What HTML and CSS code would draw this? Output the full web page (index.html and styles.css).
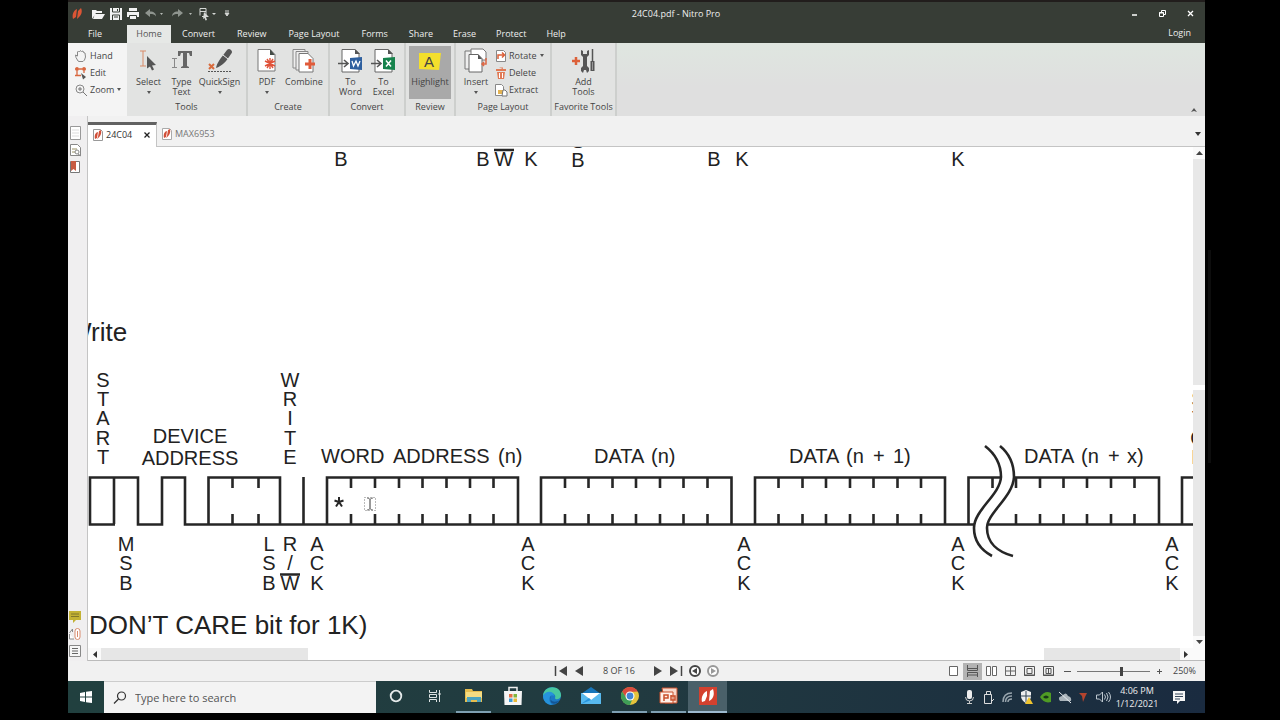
FILE: index.html
```html
<!DOCTYPE html>
<html lang="en">
<head>
<meta charset="utf-8">
<title>24C04.pdf - Nitro Pro</title>
<link rel="stylesheet" href="styles.css">
</head>
<body>
<div class="screen">
  <header class="titlebar">
    <div class="quick">
      <svg class="logo" width="18" height="18" viewBox="0 0 18 18"><path d="M5 14c-1-4 0-8 4-10l-1 8zM9 14l1-8 3-3c2 4 0 8-4 11z" fill="#dc5535"/></svg>
      <button aria-label="Open"><svg width="15" height="14" viewBox="0 0 15 14"><path d="M1 12V3h4l1 1h5v2H5zM4 7h10l-3 5H2z" fill="#f2f2f2"/></svg></button>
      <button aria-label="Save"><svg width="14" height="14" viewBox="0 0 14 14"><path d="M1 1h12v12H1z" fill="#f2f2f2"/><path d="M3.500 1v4h7V1M3.500 13V8h7v5M5 10h4M8.500 2v2" stroke="#373d36" fill="none"/></svg></button>
      <button aria-label="Print"><svg width="14" height="14" viewBox="0 0 14 14"><path d="M3 1h8v3H3zM1 5h12v5H1z" fill="#f2f2f2"/><path d="M3.500 8.500h7v4h-7z" fill="#f2f2f2" stroke="#373d36"/></svg></button>
      <button class="wide" aria-label="Undo"><svg width="22" height="14" viewBox="0 0 22 14"><path d="M1 6l5-4v2.500c4 0 6 2 6 5-1-2-3-2.500-6-2.500V10z" fill="#8f958f"/><path d="M16 6h3l-1.500 2z" fill="#b5bab5"/></svg></button>
      <button class="wide" aria-label="Redo"><svg width="24" height="14" viewBox="0 0 24 14"><path d="M13 6L8 2v2.500c-4 0-6 2-6 5C3 7.500 5 7 8 7v3z" fill="#8f958f"/><path d="M19 6h3l-1.500 2z" fill="#b5bab5"/></svg></button>
      <button class="wide" aria-label="Select tool"><svg width="24" height="14" viewBox="0 0 24 14"><path d="M3 1.500h6v8H5M3 1.500v7M3 4.500h6" stroke="#d5d8d5" fill="none"/><path d="M7 5l5 5H9l1 3-1.500.5L7.500 11 6 12z" fill="#d5d8d5"/><path d="M15 6h4l-2 2z" fill="#d5d8d5"/></svg></button>
      <button class="more" aria-label="Customize toolbar"><svg width="6" height="7" viewBox="0 0 6 7"><path d="M1 1h4M1 3h4L3 6z" stroke="#d5d8d5" fill="#d5d8d5"/></svg></button>
    </div>
    <h1 class="title">24C04.pdf - Nitro Pro</h1>
    <div class="controls">
      <button aria-label="Minimize"><svg width="9" height="9" viewBox="0 0 9 9"><path d="M2 6h5" stroke="#fff" stroke-width="1.500"/></svg></button>
      <button aria-label="Restore"><svg width="9" height="9" viewBox="0 0 9 9"><path d="M1.500 3.500h4v4h-4zM3.500 3V1.500h4v4H6M1 4h5" stroke="#fff" fill="none"/></svg></button>
      <button aria-label="Close"><svg width="9" height="9" viewBox="0 0 9 9"><path d="M2 2l5 5M7 2L2 7" stroke="#fff" stroke-width="1.300"/></svg></button>
    </div>
  </header>

  <nav class="menu">
    <button class="file">File</button><button class="home">Home</button><button>Convert</button><button>Review</button><button>Page Layout</button><button>Forms</button><button class="near">Share</button><button class="near">Erase</button><button class="near">Protect</button><button class="near">Help</button>
    <button class="login">Login</button>
  </nav>

  <section class="ribbon">
    <div class="modes">
      <button><svg width="14" height="14" viewBox="0 0 14 14"><path d="M4 12L2 8.500 1.500 6 3.500 7V3l1-1L5.500 3l1-1.500 1 1 1.500-.5.500 1.500L11 4l.5 4-1 3-1.500 1.500H5z" fill="none" stroke="#888"/></svg>Hand</button>
      <button><svg width="14" height="14" viewBox="0 0 14 14"><path d="M3 1v9M10 1v6M1 3h11M1 9.500h6" stroke="#d9673f" stroke-width="1.300"/><path d="M1.500 1.500h3v3h-3zM8.500 1.500h3v3h-3z" fill="#d9673f"/><path d="M7 7l5 4-3 2.500z" fill="#555"/></svg>Edit</button>
      <button><svg width="14" height="14" viewBox="0 0 14 14"><circle cx="6" cy="6" r="4" fill="none" stroke="#888"/><path d="M4 6h4M6 4v4M9 9l4 4" stroke="#777"/></svg>Zoom<i class="caret"></i></button>
    </div>

    <div class="group tools">
      <div class="items">
        <button class="select"><svg width="22" height="28" viewBox="0 0 22 28"><path d="M2 4h6M5 4v15M2 19h6" stroke="#d98b68" fill="none"/><path d="M9 9l9 9-4 .5 2 4-2 1-2-4-3 2z" fill="#555"/></svg>Select<i class="caret"></i></button>
        <button class="type"><svg width="24" height="28" viewBox="0 0 24 28"><path d="M8 4h14v5h-2l-1-3h-2v13l2 1v1h-8v-1l2-1V6h-2l-1 3H8z" fill="#666"/><path d="M2 11.500h5M4.500 11v9M2 20.500h5" stroke="#888"/></svg>Type<br>Text</button>
        <button class="sign"><svg width="28" height="28" viewBox="0 0 28 28"><path d="M10 21c1-5 4-9 11-18q2-2 4 0t0 4c-5 8-9 12-15 14z" fill="#555"/><path d="M17 8l5 4" stroke="#eee"/><path d="M3 17l5 5M8 17l-5 5" stroke="#d96b3d" stroke-width="2"/><path d="M2 24.500h24" stroke="#555" stroke-dasharray="2 1"/></svg>QuickSign<i class="caret"></i></button>
      </div>
      <h2>Tools</h2>
    </div>

    <div class="group create">
      <div class="items">
        <button class="pdf"><svg width="22" height="28" viewBox="0 0 22 28"><path d="M2 2.500h12l5 5V24H2z" fill="#fff" stroke="#777"/><path d="M14 2v6h5z" fill="#454c47"/><path d="M14 11v11M9 14l10 5M19 14L9 19M11 12l6 9M17 12l-6 9" stroke="#e0533a" stroke-width="1.400"/></svg>PDF<i class="caret"></i></button>
        <button class="combine"><svg width="26" height="28" viewBox="0 0 26 28"><path d="M2 2.500h12V21H2z" fill="#eee" stroke="#888"/><path d="M5 4.500h12V23H5z" fill="#eee" stroke="#888"/><path d="M8 6.500h9l5 5V25H8z" fill="#fff" stroke="#777"/><path d="M19 12v10M14 17h10" stroke="#e05b3a" stroke-width="3"/></svg>Combine</button>
      </div>
      <h2>Create</h2>
    </div>

    <div class="group convert">
      <div class="items">
        <button class="to"><svg width="26" height="28" viewBox="0 0 26 28"><path d="M4 2.500h13l4 4V25H4z" fill="#fff" stroke="#666"/><path d="M17 2v5h5z" fill="#555"/><path d="M0 16.500h9M6 13l4 3.500L6 20" stroke="#555" stroke-width="1.600" fill="none"/><path d="M12 11l12-1v13l-12-1z" fill="#2f609f"/><path d="M14 14l1.500 5 2.500-5 2 5 2-5" stroke="#fff" fill="none" stroke-width="1.300"/></svg>To<br>Word</button>
        <button class="to"><svg width="26" height="28" viewBox="0 0 26 28"><path d="M4 2.500h13l4 4V25H4z" fill="#fff" stroke="#666"/><path d="M17 2v5h5z" fill="#555"/><path d="M0 16.500h9M6 13l4 3.500L6 20" stroke="#555" stroke-width="1.600" fill="none"/><path d="M12 11l12-1v13l-12-1z" fill="#16834c"/><path d="M15 13.500l5 6M20 13.500l-5 6" stroke="#fff" stroke-width="1.500"/></svg>To<br>Excel</button>
      </div>
      <h2>Convert</h2>
    </div>

    <div class="group review">
      <div class="items">
        <button class="highlight"><svg width="26" height="28" viewBox="0 0 26 28"><path d="M2 6h22l-2 17-20-1z" fill="#f4df2c"/><text x="12" y="20" class="hl">A</text></svg>Highlight</button>
      </div>
      <h2>Review</h2>
    </div>

    <div class="group pages">
      <div class="items">
        <button class="insert"><svg width="26" height="28" viewBox="0 0 26 28"><path d="M2 4h12v18H2z" fill="#eee" stroke="#777"/><path d="M8 2h12l3 3v8H8z" fill="#fff" stroke="#777"/><path d="M6 7.500h9l4 4V25H6z" fill="#fff" stroke="#666"/><path d="M15 7v5h4z" fill="#555"/><path d="M23 11v6h-4M21 15l-2 2 2 2" stroke="#dc6845" fill="none" stroke-width="1.500"/></svg>Insert<i class="caret"></i></button>
        <div class="stack">
          <button><svg width="14" height="14" viewBox="0 0 14 14"><path d="M2.500 1.500h7l2 2v9h-9z" fill="#fff" stroke="#888"/><path d="M4 10V6h6M8 3.500L10.500 6 8 8.500" stroke="#dc6039" fill="none" stroke-width="1.500"/></svg>Rotate<i class="caret"></i></button>
          <button><svg width="14" height="14" viewBox="0 0 14 14"><path d="M2 3h10v2H2zM5 1.500h4V3M3 6h8l-1 7H4z" fill="#e17a55"/><path d="M5.500 7v5M8.500 7v5" stroke="#fff"/></svg>Delete</button>
          <button><svg width="14" height="14" viewBox="0 0 14 14"><path d="M1.500 1.500h6l2 2v9h-8z" fill="#fff" stroke="#888"/><path d="M4 7h5v4H4z" fill="#e3b352"/><path d="M9 7h2l2 2v4H8z" fill="#fff" stroke="#777"/></svg>Extract</button>
        </div>
      </div>
      <h2>Page Layout</h2>
    </div>

    <div class="group favorites">
      <div class="items">
        <button class="add"><svg width="26" height="28" viewBox="0 0 26 28"><path d="M5 10v8M1 14h8" stroke="#dc6039" stroke-width="2.500"/><path d="M10 3v5l2 2v9l-2 2v3l2 2 1-3h2l1 3 2-2v-3l-2-2v-9l2-2V3l-2 1v3h-4V4z" fill="#555"/><path d="M21.500 2v12" stroke="#555" stroke-width="1.500"/><path d="M19.500 14h4v10h-4z" fill="#555"/><path d="M21.500 15v8" stroke="#999"/></svg>Add<br>Tools</button>
      </div>
      <h2>Favorite Tools</h2>
    </div>
    <button class="collapse" aria-label="Collapse ribbon"><svg width="8" height="6" viewBox="0 0 8 6"><path d="M1 5l3-4 3 4-3-1z" fill="#555"/></svg></button>
  </section>

  <main class="workspace">
    <aside class="rail">
      <div>
        <button aria-label="Pages"><svg width="14" height="16" viewBox="0 0 14 16"><path d="M2.500 1.500h10v13h-10z" fill="#fff" stroke="#999"/><path d="M4 5h7M4 8h7M4 11h7" stroke="#ddd"/></svg></button>
        <button aria-label="Signatures"><svg width="14" height="16" viewBox="0 0 14 16"><path d="M2.500 2.500h7l3 3v8h-10z" fill="#fff" stroke="#888"/><path d="M4 7h5M4 10h4" stroke="#999164"/><circle cx="9" cy="10" r="2" fill="#fff" stroke="#888"/><path d="M10 12l3 2" stroke="#888"/></svg></button>
        <button aria-label="Bookmarks"><svg width="14" height="16" viewBox="0 0 14 16"><path d="M2.500 2.500h9v11h-9z" fill="#fff" stroke="#777"/><path d="M3 2h5v10l-2.500-2L3 12z" fill="#c75b42"/></svg></button>
      </div>
      <div>
        <button aria-label="Comments"><svg width="14" height="16" viewBox="0 0 14 16"><path d="M1 2h12v9H8l-3 3v-3H1z" fill="#c3b234"/><path d="M3 5h8M3 7.500h8" stroke="#80772b"/></svg></button>
        <button aria-label="Attachments"><svg width="14" height="16" viewBox="0 0 14 16"><path d="M1.500 7l3-4v3M1.500 8v5H6" stroke="#888" fill="#fff"/><rect x="7" y="2.500" width="5" height="11" rx="2.500" fill="#fff" stroke="#d98c6e"/><path d="M9.500 5v6" stroke="#d98c6e"/></svg></button>
        <button aria-label="Output"><svg width="14" height="16" viewBox="0 0 14 16"><path d="M1.500 2.500h11v11h-11z" fill="#f6f6f6" stroke="#888"/><path d="M4 5.500h6M4 8h6M4 10.500h6" stroke="#666"/></svg></button>
      </div>
    </aside>

    <div class="docarea">
      <div class="tabs">
        <button class="tab active"><svg width="12" height="14" viewBox="0 0 12 14"><path d="M1.500 1.500h7l2 2v9h-9z" fill="#fff" stroke="#999"/><path d="M3 11c-1-4 1-7 3-7l-1 6zM6 9l1-6 2-1c1 4-1 7-4 9z" fill="#d14f38"/></svg>24C04<svg class="x" width="8" height="8" viewBox="0 0 8 8"><path d="M1.500 1.500l5 5M6.500 1.500l-5 5" stroke="#222" stroke-width="1.300"/></svg></button>
        <button class="tab"><svg width="12" height="14" viewBox="0 0 12 14"><path d="M1.500 1.500h7l2 2v9h-9z" fill="#fff" stroke="#aaa"/><path d="M3 11c-1-4 1-7 3-7l-1 6zM6 9l1-6 2-1c1 4-1 7-4 9z" fill="#d14f38"/></svg>MAX6953</button>
        <button class="tablist" aria-label="List tabs"><svg width="8" height="6" viewBox="0 0 8 6"><path d="M1 1h6L4 5z" fill="#333"/></svg></button>
      </div>
      <div class="page">
        <svg class="sheet" width="100%" height="100%">
          <g transform="translate(-88 -147)">
            <g class="t">
              <text x="341" y="166">B</text><text x="483" y="166">B</text><text x="504" y="166">W</text><text x="531" y="166">K</text><text x="578" y="148">S</text><text x="578" y="167">B</text><text x="714" y="166">B</text><text x="742" y="166">K</text><text x="958" y="166">K</text>
              <text x="103" y="387">S</text><text x="103" y="406">T</text><text x="103" y="425">A</text><text x="103" y="445">R</text><text x="103" y="464">T</text>
              <text x="290" y="387">W</text><text x="290" y="406">R</text><text x="290" y="425">I</text><text x="290" y="445">T</text><text x="290" y="464">E</text>
              <text x="1198" y="406">S</text><text x="1198" y="425">T</text><text x="1198" y="445">O</text><text x="1198" y="464">P</text>
              <text x="190" y="443">DEVICE</text><text x="190" y="465">ADDRESS</text>
              <text x="126" y="551">M</text><text x="126" y="570">S</text><text x="126" y="590">B</text>
              <text x="269" y="551">L</text><text x="269" y="570">S</text><text x="269" y="590">B</text>
              <text x="290" y="551">R</text><text x="290" y="570">/</text><text x="290" y="590">W</text>
              <text x="317" y="551">A</text><text x="317" y="570">C</text><text x="317" y="590">K</text>
              <text x="528" y="551">A</text><text x="528" y="570">C</text><text x="528" y="590">K</text>
              <text x="744" y="551">A</text><text x="744" y="570">C</text><text x="744" y="590">K</text>
              <text x="958" y="551">A</text><text x="958" y="570">C</text><text x="958" y="590">K</text>
              <text x="1172" y="551">A</text><text x="1172" y="570">C</text><text x="1172" y="590">K</text>
            </g>
            <g class="t name">
              <text x="321" y="463">WORD <tspan x="393">ADDRESS </tspan><tspan x="498">(n)</tspan></text>
              <text x="594" y="463">DATA <tspan x="651">(n)</tspan></text>
              <text x="789" y="463">DATA <tspan x="846">(n </tspan><tspan x="873">+ </tspan><tspan x="893">1)</tspan></text>
              <text x="1024" y="463">DATA <tspan x="1081">(n </tspan><tspan x="1108">+ </tspan><tspan x="1127">x)</tspan></text>
            </g>
            <g class="big"><text x="67" y="341">Write</text><text x="89" y="634">DON’T CARE bit for 1K)</text></g>
            <g class="line">
              <path d="M494 150h20M280 574.500h20"/>
              <path d="M115 524.500H90V477.500h48v47h24v-47h23v47H1193M114 477v47M208.500 524v-46.500H280V524M303.500 477v47M327 524v-46.500H518V524M541 524v-46.500H731.500V524M755 524v-46.500H945V524M968.500 524v-46.500H1159V524M1182 524v-46.500H1195"/>
              <path d="M232.500 478v10m0 26v10M258.500 478v10m0 26v10M351 478v10m0 26v10M375 478v10m0 26v10M399 478v10m0 26v10M422.500 478v10m0 26v10M446.500 478v10m0 26v10M470 478v10m0 26v10M493.500 478v10m0 26v10"/>
              <path d="M565 478v10m0 26v10M588.500 478v10m0 26v10M612.500 478v10m0 26v10M636 478v10m0 26v10M660 478v10m0 26v10M683.500 478v10m0 26v10M707.500 478v10m0 26v10M778.500 478v10m0 26v10M802.500 478v10m0 26v10M826 478v10m0 26v10M850 478v10m0 26v10M873.500 478v10m0 26v10M897.500 478v10m0 26v10M921 478v10m0 26v10"/>
              <path d="M992.500 478v10M1016 478v10m0 26v10M1040 478v10m0 26v10M1063.500 478v10m0 26v10M1087 478v10m0 26v10M1111 478v10m0 26v10M1134.500 478v10m0 26v10"/>
              <path class="gap" d="M985 446C998 456 1001 468 1001 477C1000 495 974 510 974 528C974 540 981 550 992 556L1013 556C998 552 987 543 987 528C987 513 1013 497 1014 477C1014 468 1011 455 1000 446Z"/>
              <path d="M985 446C998 456 1001 468 1001 477C1000 495 974 510 974 528C974 540 981 550 992 556M1000 446C1011 455 1014 468 1014 477C1013 497 987 513 987 528C987 543 998 552 1013 556"/>
              <path d="M339 497v5l-4.500-1.500M339 502l4.500-1.500M339 502l-3 4.500M339 502l3 4.500" class="star"/>
              <path d="M367 498q3 0 3 2v8q0 2-3 2M373 498q-3 0-3 2v8q0 2 3 2" class="cursor"/>
              <path d="M364.500 497.500h11v13h-11z" class="cursor" stroke-dasharray="1 2"/>
            </g>
          </g>
        </svg>
        <div class="vscroll"><svg width="12" height="12" viewBox="0 0 12 12"><path d="M3 8h7L6.500 4z" fill="#444"/></svg><i class="thumb"></i><svg width="12" height="12" viewBox="0 0 12 12"><path d="M3 4h7L6.500 8z" fill="#444"/></svg></div>
      </div>
      <div class="hscroll"><svg width="13" height="12" viewBox="0 0 13 12"><path d="M9 3v7L5 6.500z" fill="#333"/></svg><i class="before"></i><i class="thumb"></i><i class="after"></i><svg width="13" height="12" viewBox="0 0 13 12"><path d="M4 3v7l4-3.500z" fill="#333"/></svg><i class="corner"></i></div>
    </div>
  </main>

  <footer class="status">
    <div class="pager">
      <button aria-label="First page"><svg width="14" height="12" viewBox="0 0 14 12"><path d="M1.500 1v10" stroke="#444" stroke-width="1.500"/><path d="M13 1v10L5 6z" fill="#444"/></svg></button>
      <button aria-label="Previous page"><svg width="10" height="12" viewBox="0 0 10 12"><path d="M9 1v10L1 6z" fill="#444"/></svg></button>
      <span>8 OF 16</span>
      <button aria-label="Next page"><svg width="10" height="12" viewBox="0 0 10 12"><path d="M1 1v10l8-5z" fill="#444"/></svg></button>
      <button aria-label="Last page"><svg width="14" height="12" viewBox="0 0 14 12"><path d="M12.500 1v10" stroke="#444" stroke-width="1.500"/><path d="M1 1v10l8-5z" fill="#444"/></svg></button>
      <button aria-label="Back"><svg width="12" height="12" viewBox="0 0 12 12"><circle cx="6" cy="6" r="5" fill="#fff" stroke="#444" stroke-width="2"/><path d="M8 3v6L3 6z" fill="#444"/></svg></button>
      <button aria-label="Forward"><svg width="12" height="12" viewBox="0 0 12 12"><circle cx="6" cy="6" r="5" fill="#fff" stroke="#999" stroke-width="2"/><path d="M4 3v6l5-3z" fill="#999"/></svg></button>
    </div>
    <div class="view">
      <button aria-label="Single page"><svg width="11" height="12" viewBox="0 0 11 12"><path d="M1.500 1.500h8v9h-8z" fill="#fff" stroke="#666"/></svg></button>
      <button class="on" aria-label="Continuous"><svg width="11" height="12" viewBox="0 0 11 12"><path d="M.5 0v5.500h10V0M.5 12V7.500h10V12M1 3.500h9M1 10h9" fill="none" stroke="#555"/></svg></button>
      <button aria-label="Facing"><svg width="11" height="12" viewBox="0 0 11 12"><path d="M.5 1.500h4v9h-4zM6.500 1.500h4v9h-4z" fill="#fff" stroke="#666"/></svg></button>
      <button aria-label="Continuous facing"><svg width="11" height="12" viewBox="0 0 11 12"><path d="M.5 1.500h10v9H.5zM5.500 1v10M0 6h11" fill="none" stroke="#666"/></svg></button>
      <button aria-label="Fit page"><svg width="11" height="12" viewBox="0 0 11 12"><path d="M.5 1.500h10v9H.5zM3 3.500h5v5H3zM0 10h11" fill="none" stroke="#555"/></svg></button>
      <button aria-label="Fit width"><svg width="11" height="12" viewBox="0 0 11 12"><path d="M.5 1.500h10v9H.5zM3 3.500h5v5H3zM5.500 4v5M0 10h11" fill="none" stroke="#555"/></svg></button>
      <button class="step" aria-label="Zoom out"><svg width="7" height="7" viewBox="0 0 7 7"><path d="M0 3.500h7" stroke="#555"/></svg></button>
      <input type="range" aria-label="Zoom" min="0" max="100" value="61">
      <button class="step" aria-label="Zoom in"><svg width="7" height="7" viewBox="0 0 7 7"><path d="M1 3.500h5M3.500 1v5" stroke="#555"/></svg></button>
      <span>250%</span>
    </div>
  </footer>

  <footer class="taskbar">
    <button class="start" aria-label="Start"><svg width="14" height="14" viewBox="0 0 14 14"><path d="M1 3l5-1v4.500H1zM7 1.800L13 1v5.500H7zM1 7.500h5V12l-5-1zM7 7.500h6V13l-6-.8z" fill="#fff"/></svg></button>
    <label class="search"><svg width="16" height="16" viewBox="0 0 16 16"><circle cx="9.500" cy="6" r="4" fill="none" stroke="#333" stroke-width="1.200"/><path d="M6.500 9L2 13.500" stroke="#333" stroke-width="1.300"/></svg><input type="text" placeholder="Type here to search" aria-label="Search"></label>
    <div class="apps">
      <button aria-label="Cortana"><svg width="20" height="20" viewBox="0 0 20 20"><circle cx="10" cy="10" r="5.300" fill="none" stroke="#e5eaea" stroke-width="1.800"/></svg></button>
      <button aria-label="Task view"><svg width="20" height="20" viewBox="0 0 20 20"><path d="M4.500 4v2.500h7V4M4.500 16v-2.500h7V16M4.500 8.500h7v3h-7zM14.500 4v12" fill="none" stroke="#dde3e3"/><path d="M13.500 7h2v2h-2z" fill="#dde3e3"/></svg></button>
      <button class="run" aria-label="File Explorer"><svg width="20" height="20" viewBox="0 0 20 20"><path d="M1 3h7l1 2h9v11H1z" fill="#e6bd4f"/><path d="M2 6h16v6H2z" fill="#f5dc82"/><path d="M3 11h14v5h-4v-2H7v2H3z" fill="#4ba3bf"/></svg></button>
      <button aria-label="Store"><svg width="20" height="20" viewBox="0 0 20 20"><path d="M6 6V1.500h8V6" fill="none" stroke="#eee" stroke-width="1.500"/><path d="M1 5h18l-.5 14h-17z" fill="#f5f5f5"/><path d="M6 8h3.500v3.500H6z" fill="#e56d42"/><path d="M10.500 8H14v3.500h-3.500z" fill="#82b63c"/><path d="M6 12.500h3.500V16H6z" fill="#3a9bd6"/><path d="M10.500 12.500H14V16h-3.500z" fill="#e9b936"/></svg></button>
      <button aria-label="Edge"><svg width="20" height="20" viewBox="0 0 20 20"><circle cx="10" cy="10" r="9" fill="#1c79c5"/><path d="M1 10C2-2 20-1 19 10c-1 4-6 4-6 2 2-5-7-8-12-2z" fill="#48c7a0"/><path d="M1 10c3-6 11-5 11 0-4-3-7 4-2 9-5 0-9-4-9-9z" fill="#2693dc"/><path d="M9 10c-3 4 3 8 9 4-3 5-12 6-9-4z" fill="#145695"/></svg></button>
      <button aria-label="Mail"><svg width="20" height="20" viewBox="0 0 20 20"><path d="M0 8l10-7 10 7z" fill="#1876ba"/><path d="M0 7h20v11H0z" fill="#58b9ee"/><path d="M1 7h18l-9 7z" fill="#fff"/><path d="M0 18l8-6 2 2z" fill="#2794dd"/></svg></button>
      <button class="run" aria-label="Chrome"><svg width="20" height="20" viewBox="0 0 20 20"><circle cx="10" cy="10" r="9" fill="#e5c33c"/><path d="M2.200 5.500A9 9 0 0 1 17.800 5.500L10 6 6 12z" fill="#d94b3e"/><path d="M2.200 5.500L7 13l5 1-2 5A9 9 0 0 1 2.200 5.500z" fill="#3f9e57"/><circle cx="10" cy="10" r="4.500" fill="#fff"/><circle cx="10" cy="10" r="3.400" fill="#4285d4"/></svg></button>
      <button class="run" aria-label="PowerPoint"><svg width="20" height="20" viewBox="0 0 20 20"><path d="M3 2h15v15H6z" fill="#f7d9cc" stroke="#c9502c"/><path d="M1 6h13v11H1z" fill="#fff1ea" stroke="#c9502c"/><path d="M5 15V9h4v3H5M12 9v5h4v-4h-4" fill="none" stroke="#c9502c" stroke-width="1.500"/></svg></button>
      <button class="run current" aria-label="Nitro Pro"><svg width="20" height="20" viewBox="0 0 20 20"><path d="M1 1h18v18H1z" fill="#d4412f"/><path d="M4 16c-1-5 1-9 5-11v5l-2 5zM11 15l1-10 3-2c2 6 0 10-4 12z" fill="#fff"/></svg></button>
    </div>
    <div class="tray">
      <svg width="19" height="16" viewBox="0 0 19 16"><rect x="7" y="1" width="5" height="9" rx="2" fill="#eee"/><path d="M5.500 8q0 4 4 4t4-4M9.500 12v3M7 14.500h5" stroke="#ccc" fill="none"/></svg>
      <svg width="19" height="16" viewBox="0 0 19 16"><path d="M7.500 5.500V2.500h4v3M5.500 5.500h7v9h-7zM12 13l3-3" stroke="#ddd" fill="none"/></svg>
      <svg width="19" height="16" viewBox="0 0 19 16"><path d="M5 13Q5 4 14 4M7.500 13q0-6 6.500-6M10 13q0-3 4-3" stroke="#99a5ad" fill="none" stroke-width="1.500"/></svg>
      <svg width="19" height="16" viewBox="0 0 19 16"><path d="M4 3l5-2 5 2v5q-1 4-5 6-4-2-5-6z" fill="#eee"/><path d="M9 2v11M4 7h10" stroke="#345"/><path d="M8 15l4-7 4 7z" fill="#f0c52f"/></svg>
      <svg width="19" height="16" viewBox="0 0 19 16"><path d="M4 8q5-7 11-4v9q-7 2-11-5z" fill="#4f9b24"/><path d="M7 8q3-3 6 0-3 3-6 0z" fill="#173519"/></svg>
      <svg width="19" height="16" viewBox="0 0 19 16"><path d="M5 12q-3-4 2-5 4-5 6 0 4 1 3 5z" fill="#aab4bb"/><path d="M4 3l12 11" stroke="#e5eaee"/></svg>
      <svg width="19" height="16" viewBox="0 0 19 16"><path d="M5 4h8l-2 4-2 5-1-6z" fill="#b4442e"/></svg>
      <svg width="19" height="16" viewBox="0 0 19 16"><path d="M3.500 6h3l3-3v10l-3-3h-3zM11.500 5.500q2 2.500 0 5M13.500 4q3 4 0 8M15.500 3q4 5 0 10" stroke="#bdc7cf" fill="none"/></svg>
      <time>4:06 PM<br>1/12/2021</time>
      <svg width="16" height="16" viewBox="0 0 16 16"><path d="M2 2h12v10H9l-3 3v-3H2z" fill="#f5f5f5"/><path d="M4 5h8M4 7.500h8M4 10h5" stroke="#34465a"/></svg>
    </div>
  </footer>
</div>
<i class="edge"></i>
</body>
</html>
```
FILE: styles.css
```css
* { box-sizing: border-box; }
body {
  margin: 0;
  height: 100vh;
  background: #000;
  display: grid;
  grid-template-columns: 1fr 75px;
  padding: 0 0 7px 68px;
  overflow: hidden;
  font: 9px/10px "Open Sans", "Noto Sans", sans-serif;
  color: #444;
}
button {
  border: 0;
  padding: 0;
  margin: 0;
  background: none;
  font: inherit;
  color: inherit;
  display: flex;
  align-items: center;
  justify-content: center;
}
svg { display: block; flex: none; }
i { display: block; }
h1, h2 { margin: 0; font: inherit; text-align: center; }
.screen { min-width: 0; display: flex; flex-direction: column; background: #f1f1f1; }
.edge { width: 3px; height: 213px; margin: 250px 0 0 3px; background: #0d0d0d; }

.titlebar {
  height: 25px;
  background: #373d36;
  border-top: 2px solid #211d1c;
  display: flex;
  align-items: center;
  color: #eee;
}
.quick { display: flex; align-items: center; width: 164px; }
.quick .logo { margin-right: 4px; }
.quick button { width: 17px; }
.quick .wide { width: 27px; }
.quick .more { width: 10px; }
.title { flex: 1; }
.controls { display: flex; width: 85px; }
.controls button { width: 29px; }

.menu { display: flex; height: 18px; background: #373d36; color: #eee; }
.menu button { padding: 0 11px; }
.menu .near { padding: 0 10px; }
.menu .file { width: 59px; padding: 0 5px 0 0; }
.menu .home { width: 44px; background: #e6e8e6; color: #555; }
.menu .login { margin-left: auto; padding: 0 14px 2px; }

.ribbon {
  height: 73px;
  display: flex;
  background: linear-gradient(#dfe6e0, #dfdfdf 60%);
}
.modes { width: 59px; background: #f4f4f4; padding: 4px 0 0 6px; }
.modes button { height: 17px; gap: 2px; }
.caret {
  width: 0;
  border: 2px solid transparent;
  border-top: 3px solid #555;
  border-bottom: 0;
}
.modes .caret { margin-left: 1px; }
.group { background: #e2e3e2; border-right: 2px solid #cdcfcd; }
.items { display: flex; justify-content: center; height: 59px; padding-top: 3px; }
.items > button { flex-direction: column; justify-content: flex-start; }
.items > button > svg { margin: 1px 0 2px; }
.items > button > .caret { margin-top: 4px; }
.tools { width: 121px; }
.select { width: 38px; }
.type { width: 28px; }
.sign { width: 48px; }
.create { width: 82px; }
.pdf { width: 32px; }
.combine { width: 42px; }
.convert { width: 76px; }
.to { width: 33px; }
.review { width: 50px; }
.items > .highlight { width: 42px; height: 53px; background: #a9a9a9; }
.hl { font: 15px "Liberation Sans", sans-serif; text-anchor: middle; fill: #444; }
.pages { width: 96px; }
.insert { width: 36px; }
.stack { width: 54px; display: flex; flex-direction: column; padding-top: 1px; }
.stack button { height: 17px; gap: 1px; justify-content: flex-start; }
.stack .caret { margin-left: 3px; }
.favorites { width: 65px; }
.add { width: 34px; }
.collapse { margin-left: auto; align-self: flex-end; padding: 3px 7px; }

.workspace { flex: 1; min-height: 0; display: flex; }
.rail {
  width: 19px;
  background: #f0eff0;
  display: flex;
  flex-direction: column;
  justify-content: space-between;
  padding: 8px 0 2px;
}
.rail button { width: 14px; height: 17px; }
.docarea { flex: 1; min-width: 0; display: flex; flex-direction: column; border-left: 1px solid #c4c4c4; }
.tabs { height: 31px; display: flex; align-items: flex-end; border-bottom: 1px solid #c4c4c4; }
.tab { height: 24px; gap: 2px; padding: 0 5px 0 4px; color: #777; }
.tab.active {
  width: 69px;
  height: 25px;
  margin-bottom: -1px;
  padding-bottom: 2px;
  border-top: 3px solid #626262;
  border-right: 1px solid #c4c4c4;
  background: #fff;
  color: #333;
}
.tab .x { margin-left: auto; }
.tablist { margin-left: auto; height: 24px; padding: 0 3px; }
.page { flex: 1; min-height: 0; display: flex; background: #fff; }
.sheet { flex: 1; min-width: 0; overflow: hidden; }
.t, .big { fill: #222; font-family: "Liberation Sans", Arial, sans-serif; }
.t { font-size: 20px; text-anchor: middle; }
.name { text-anchor: start; }
.big { font-size: 26px; }
.line { fill: none; stroke: #262626; stroke-width: 2.6; }
.line .gap { fill: #fff; stroke: none; }
.line .star { stroke-width: 2; }
.line .cursor { stroke: #777; stroke-width: 1; }
.vscroll {
  width: 12px;
  background: #e8e8e8;
  display: flex;
  flex-direction: column;
  justify-content: space-between;
}
.vscroll svg { background: #fafafa; }
.vscroll .thumb { height: 5px; margin-bottom: 20px; background: #fff; }
.hscroll { height: 13px; display: flex; background: #fff; border-bottom: 1px solid #bbb; }
.hscroll svg, .hscroll .corner { background: #fafafa; }
.before { flex: 207; background: #e6e6e6; }
.hscroll .thumb { flex: 737; }
.after { flex: 136; background: #e6e6e6; }
.corner { width: 12px; }

.status {
  height: 20px;
  display: grid;
  grid-template-columns: 1fr auto 1fr;
  align-items: center;
}
.pager { grid-column: 2; display: flex; align-items: center; gap: 6px; }
.pager span { margin: 0 12px 0 13px; }
.view { display: flex; justify-content: flex-end; align-items: center; padding-right: 9px; }
.view button { width: 19px; height: 17px; }
.view .on { background: #b3b3b3; }
.view span { width: 23px; margin-left: 4px; white-space: nowrap; }
.view input {
  appearance: none;
  width: 73px;
  height: 12px;
  margin: 0;
  background: linear-gradient(#777, #777) center / 100% 1px no-repeat;
}
.view input::-webkit-slider-thumb { appearance: none; width: 3px; height: 9px; background: #444; }

.taskbar {
  height: 32px;
  display: flex;
  background: linear-gradient(90deg, #21403f, #213a40 50%, #1a2b40);
  color: #eee;
}
.start { width: 36px; }
.search { flex: 0 0 272px; display: flex; align-items: center; gap: 7px; padding-left: 8px; background: #f3f3f3; border-top: 1px solid #ccc; }
.search input {
  border: 0;
  padding: 0;
  background: none;
  min-width: 0;
  flex: 1;
  font: 11px/16px "Open Sans", sans-serif;
}
.search input::placeholder { color: #555; }
.apps { display: flex; }
.apps button { width: 39px; border-bottom: 2px solid transparent; }
.apps .run { border-image: linear-gradient(90deg, transparent 4px, #7f9fb2 4px, #7f9fb2 35px, transparent 35px) 2; border-width: 0 0 2px; border-style: solid; }
.apps .current { background: #4a6069; border-image: none; border-color: #9db9cf; }
.tray { margin-left: auto; display: flex; align-items: center; padding-right: 18px; }
.tray time { width: 50px; margin: 0 9px 0 0; text-align: center; line-height: 13px; }
```
